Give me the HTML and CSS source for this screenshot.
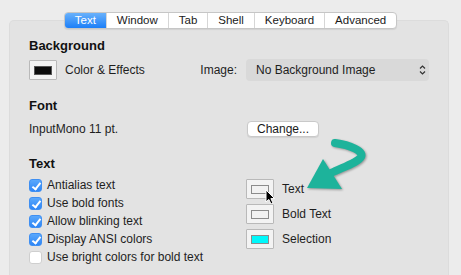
FILE: index.html
```html
<!DOCTYPE html>
<html lang="en">
<head>
    <meta charset="UTF-8">
    <meta name="viewport" content="width=device-width, initial-scale=1.0">
    <title>Profiles - Text</title>
    <link rel="stylesheet" href="styles.css">
</head>
<body>
    <div class="window">
        <nav class="tabs">
            <span class="tab active">Text</span>
            <span class="tab">Window</span>
            <span class="tab">Tab</span>
            <span class="tab">Shell</span>
            <span class="tab">Keyboard</span>
            <span class="tab">Advanced</span>
        </nav>

        <div class="panel">
            <section class="group">
                <h2>Background</h2>
                <div class="split bg-row">
                    <div class="cell">
                        <span class="well"><span class="swatch black"></span></span>
                        <span>Color &amp; Effects</span>
                        <span class="field-label">Image:</span>
                    </div>
                    <div class="popup">
                        <span>No Background Image</span>
                        <svg class="chevrons" width="7" height="12" viewBox="0 0 7 12">
                            <path d="M1 4.5 L3.5 2 L6 4.5 M1 7.5 L3.5 10 L6 7.5" fill="none" stroke="#333" stroke-width="1.2"/>
                        </svg>
                    </div>
                </div>
            </section>

            <section class="group">
                <h2>Font</h2>
                <div class="split font-row">
                    <div class="cell">InputMono 11 pt.</div>
                    <div><button class="btn">Change...</button></div>
                </div>
            </section>

            <section class="group">
                <h2>Text</h2>
                <div class="split options">
                    <div class="checks">
                        <label class="check-row"><span class="check on"></span>Antialias text</label>
                        <label class="check-row"><span class="check on"></span>Use bold fonts</label>
                        <label class="check-row"><span class="check on"></span>Allow blinking text</label>
                        <label class="check-row"><span class="check on"></span>Display ANSI colors</label>
                        <label class="check-row"><span class="check"></span>Use bright colors for bold text</label>
                    </div>
                    <div class="colors">
                        <div class="color-row">
                            <span class="well">
                                <span class="swatch light"></span>
                                <svg class="cursor" width="11" height="16" viewBox="0 0 11 16">
                                    <path d="M1 1 L1 13 L3.8 10.4 L6 15 L8 14.1 L5.9 9.6 L9.6 9.6 Z" fill="#000" stroke="#fff" stroke-width="1"/>
                                </svg>
                            </span>
                            <span>Text</span>
                        </div>
                        <div class="color-row">
                            <span class="well"><span class="swatch light"></span></span>
                            <span>Bold Text</span>
                        </div>
                        <div class="color-row">
                            <span class="well"><span class="swatch cyan"></span></span>
                            <span>Selection</span>
                        </div>
                    </div>
                </div>
            </section>

            <!-- callout arrow pointing at the Text colour well -->
            <svg class="callout" width="64" height="58" viewBox="304 136 64 58">
                <path d="M334 142 C349 144, 363 150, 360 156 C357 161, 345 165, 330 172" fill="none" stroke="#1db39b" stroke-width="8" stroke-linecap="round"/>
                <polygon points="306,187 322,158 341,188" fill="#1db39b"/>
            </svg>
        </div>
    </div>
</body>
</html>
```

FILE: styles.css
```css
html, body {
    margin: 0;
    padding: 0;
    height: 100%;
}

body {
    font-family: 'Liberation Sans', Arial, sans-serif;
    font-size: 12px;
    color: #1e1e1e;
    background: #ececec;
    overflow: hidden;
}

.window {
    padding: 12px 12px 0 9px;
    height: 100%;
    box-sizing: border-box;
    display: flex;
    flex-direction: column;
}

.tabs {
    flex: none;
    display: flex;
    align-self: center;
    position: relative;
    z-index: 1;
    margin-bottom: -9px;
    margin-left: 3px;
    height: 17px;
    background: #fff;
    border: 1px solid #c6c6c6;
    border-radius: 4px;
    box-shadow: 0 1px 1px rgba(0, 0, 0, 0.08);
    overflow: hidden;
    box-sizing: border-box;
}

.tab {
    padding: 0 10px;
    font-size: 11.5px;
    line-height: 15px;
    color: #1a1a1a;
    border-left: 1px solid #d6d6d6;
}

.tab:first-child {
    border-left: none;
}

.tab.active {
    background: linear-gradient(#69b1fb, #1c7ff8);
    color: #fff;
}

.panel {
    position: relative;
    flex: 1 0 auto;
    background: #e3e3e3;
    border: 1px solid #dcdcdc;
    border-bottom: none;
    border-radius: 5px 5px 0 0;
    padding: 17px 0 0 19px;
}

h2 {
    margin: 0;
    font-size: 13px;
    line-height: 16px;
    font-weight: bold;
    color: #111;
}

.group {
    margin-bottom: 17px;
}

.group:nth-child(2) {
    margin-bottom: 18px;
}

.split {
    display: grid;
    grid-template-columns: 217px 183px;
    align-items: center;
}

.cell {
    display: flex;
    align-items: center;
    gap: 8px;
}

.bg-row {
    margin-top: 5px;
    height: 22px;
}

.field-label {
    margin-left: auto;
    padding-right: 9px;
}

.well {
    position: relative;
    display: flex;
    align-items: center;
    justify-content: center;
    width: 28px;
    height: 20px;
    box-sizing: border-box;
    background: #f3f3f3;
    border: 1px solid #b9b9b9;
    border-radius: 1px;
    flex: none;
}

.swatch {
    width: 18px;
    height: 9px;
    box-sizing: border-box;
    border: 1px solid #8c8c8c;
}

.swatch.black {
    background: #0c0c0c;
    border-color: #555;
}

.swatch.light {
    background: #f2f2f2;
}

.swatch.cyan {
    background: #00f8fb;
}

.popup {
    display: flex;
    align-items: center;
    justify-content: space-between;
    height: 22px;
    padding: 0 3px 0 10px;
    background: #d9d9d9;
    border-radius: 4px;
}

.font-row {
    margin-top: 6px;
    height: 18px;
}

.btn {
    font-family: inherit;
    font-size: 12px;
    color: #1a1a1a;
    height: 16px;
    padding: 0 9px;
    margin-left: 1px;
    line-height: 14px;
    background: #fff;
    border: 1px solid #c9c9c9;
    border-radius: 4px;
    box-shadow: 0 1px 1px rgba(0, 0, 0, 0.08);
}

.options {
    margin-top: 4px;
    align-items: start;
}

.check-row {
    display: flex;
    align-items: center;
    gap: 5px;
    height: 18px;
}

.check {
    position: relative;
    width: 13px;
    height: 13px;
    box-sizing: border-box;
    border-radius: 3px;
    background: #fff;
    border: 1px solid #cfcfcf;
    flex: none;
}

.check.on {
    background: linear-gradient(#5aa8fc, #2e86f6);
    border-color: #3f8ff2;
}

.check.on::after {
    content: "";
    position: absolute;
    left: 4px;
    top: 1px;
    width: 3px;
    height: 7px;
    border: solid #fff;
    border-width: 0 2px 2px 0;
    transform: rotate(38deg);
}

.colors {
    display: flex;
    flex-direction: column;
    gap: 5px;
    padding-top: 3px;
}

.color-row {
    display: flex;
    align-items: center;
    gap: 8px;
}

.cursor {
    position: absolute;
    left: 18px;
    top: 9px;
}

.callout {
    position: absolute;
    left: 295px;
    top: 116px;
    filter: drop-shadow(1px 1px 1px rgba(0, 0, 0, 0.35));
}
```
